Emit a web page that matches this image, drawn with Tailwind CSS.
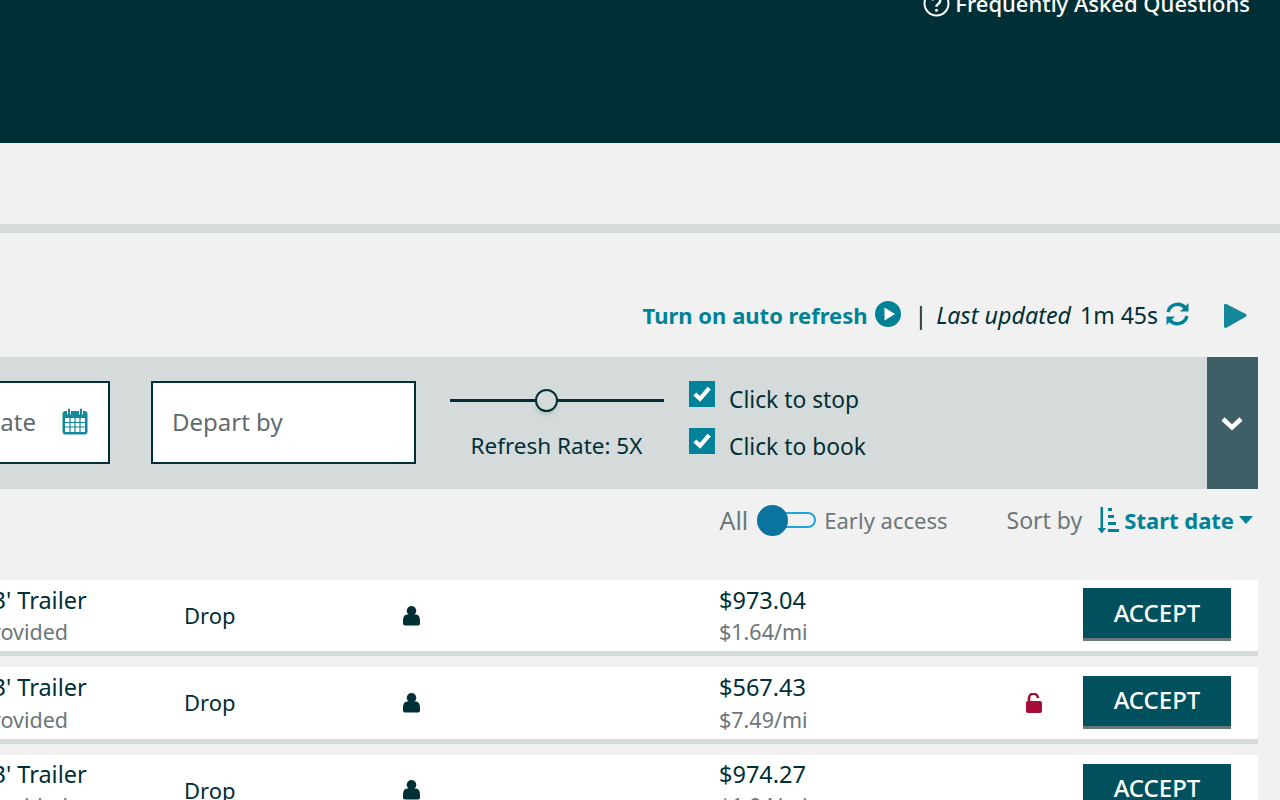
<!DOCTYPE html>
<html lang="en">
<head>
    <meta charset="UTF-8">
    <meta name="viewport" content="width=device-width, initial-scale=1.0">
    <script src="https://cdn.jsdelivr.net/npm/@tailwindcss/browser@4"></script>
    <title>Load Board</title>
</head>
<body class="h-[800px] overflow-hidden bg-[#f1f1f1] font-['Noto_Sans',sans-serif] text-[#002f36]">

    <!-- header -->
    <header class="h-[143px] bg-[#002f36] overflow-hidden flex justify-end pr-[30px]">
        <a class="flex items-center gap-[5px] h-[20px] mt-[-7px] text-white text-[22px] leading-none font-medium whitespace-nowrap">
            <svg class="w-[27px] h-[27px] shrink-0" viewBox="0 0 27 27" fill="none" stroke="white" stroke-width="2">
                <circle cx="13.5" cy="13.5" r="12"/>
                <path d="M9.8 10.5a3.7 3.7 0 1 1 5.9 3c-1.4 1-2.2 1.700-2.200 3.300" stroke-width="2.400"/>
                <circle cx="13.500" cy="20.300" r="1.500" fill="white" stroke="none"/>
            </svg>
            Frequently Asked Questions
        </a>
    </header>

    <div class="h-[81px]"></div>
    <div class="h-[9px] bg-[#d5dbdb]"></div>

    <!-- refresh line -->
    <div class="h-[124px] pt-[68px] flex justify-end items-start pr-[32px] text-[23px] leading-[28px] whitespace-nowrap">
        <span class="text-[22px] font-bold text-[#008296]">Turn on auto refresh</span>
        <svg class="ml-[7px] w-[26px] h-[26px]" viewBox="0 0 26 26"><circle cx="13" cy="13" r="13" fill="#008296"/><path d="M9.500 6.500v13l10.500-6.500z" fill="white"/></svg>
        <span class="ml-[14px]">|</span>
        <span class="ml-[9px] italic text-[23.300px]">Last updated</span>
        <span class="ml-[9px]">1m 45s</span>
        <svg class="ml-[7px] w-[25px] h-[26px]" viewBox="0 0 25 26" fill="none" stroke="#008296" stroke-width="3.400">
            <path d="M3 11a10 10 0 0 1 17-4.500"/><path d="M22 15a10 10 0 0 1-17 4.500"/>
            <path d="M23.500 2v8.500h-8.500z" fill="#008296" stroke="none"/><path d="M1.500 24v-8.500h8.500z" fill="#008296" stroke="none"/>
        </svg>
        <svg class="ml-[32px] mt-[1px] w-[26px] h-[28px]" viewBox="0 0 26 28"><path d="M2 3.500v21a1.500 1.500 0 0 0 2.300 1.200l19.500-11a1.500 1.500 0 0 0 0-2.600l-19.500-10a1.500 1.500 0 0 0-2.300 1.400z" fill="#13889b"/></svg>
    </div>

    <!-- filter bar -->
    <div class="w-[1258px] h-[132px] flex bg-[#d5dbdb]">
        <div class="flex-1 flex items-start pt-[24px] ml-[-60px]">
            <div class="w-[170px] h-[83px] pb-[2px] border-2 border-[#002f36] bg-white flex items-center justify-end pr-[20px] gap-[26px] text-[24px] text-[#5f6b6f]">
                <span>ate</span>
                <svg class="w-[26px] h-[27px]" viewBox="0 0 26 27" fill="none" stroke="#13889b">
                    <rect x="1" y="3.500" width="24" height="22.500" rx="2" fill="#13889b"/>
                    <rect x="3" y="10" width="20" height="14" fill="white" stroke="none"/>
                    <path d="M8 10v14M13 10v14M18 10v14M3 14.500h20M3 19h20" stroke-width="1.200"/>
                    <path d="M7 1.500v5M19 1.500v5" stroke="white" stroke-width="4"/><path d="M7 1.500v5M19 1.500v5" stroke-width="2" stroke-linecap="round"/>
                </svg>
            </div>
            <div class="ml-[41px] w-[265px] h-[83px] pb-[2px] border-2 border-[#002f36] bg-white flex items-center pl-[19px] text-[24px] text-[#5f6b6f]">Depart by</div>

            <div class="ml-[33px] w-[215px] flex flex-col items-center">
                <div class="relative w-[214px] h-[3px] mt-[18px] bg-[#002f36]">
                    <span class="absolute left-[85px] top-[-10px] w-[23px] h-[23px] rounded-full border-2 border-[#002f36] bg-[#d5dbdb] shadow-md"></span>
                </div>
                <p class="mt-[29px] text-[22.500px] leading-[30px] whitespace-nowrap">Refresh Rate: 5X</p>
            </div>

            <div class="ml-[25px] flex flex-col gap-[15px] text-[22.800px] leading-[27px]">
                <label class="flex items-start gap-[14px] whitespace-nowrap">
                    <svg class="w-[26px] h-[26px]" viewBox="0 0 27 27"><rect width="27" height="27" fill="#00829a"/><path d="M6 13.500l5.500 5 9.500-11" fill="none" stroke="white" stroke-width="4.400"/></svg>
                    <span class="mt-[5px]">Click to stop</span>
                </label>
                <label class="flex items-start gap-[14px] whitespace-nowrap">
                    <svg class="w-[26px] h-[26px]" viewBox="0 0 27 27"><rect width="27" height="27" fill="#00829a"/><path d="M6 13.500l5.500 5 9.500-11" fill="none" stroke="white" stroke-width="4.400"/></svg>
                    <span class="mt-[5px]">Click to book</span>
                </label>
            </div>
        </div>
        <button class="w-[51px] bg-[#3f5f66] flex items-center justify-center pr-[2px]">
            <svg class="w-[22px] h-[15px]" viewBox="0 0 22 15" fill="none" stroke="white" stroke-width="4.500"><path d="M2 3l9 8.500L20 3"/></svg>
        </button>
    </div>

    <!-- toggle and sort -->
    <div class="w-[1258px] h-[91px] pt-[16px] flex justify-end items-start pr-[5px] text-[22px] leading-[30px] text-[#6c7778] whitespace-nowrap">
        <span class="text-[25px]">All</span>
        <span class="relative ml-[9px] mt-[7px] w-[59px] h-[16px] rounded-full border-2 border-[#1ca7d8]">
            <span class="absolute left-[-2px] top-[-9px] w-[31px] h-[31px] rounded-full bg-[#0b73a0]"></span>
        </span>
        <span class="ml-[8px]">Early access</span>
        <span class="ml-[59px] text-[23px]">Sort by</span>
        <svg class="ml-[14px] mt-[2px] w-[23px] h-[27px]" viewBox="0 0 23 27" fill="#00829a">
            <path d="M4.500 0h2.500v21h3l-4.200 5.500L1.500 21h3z"/><rect x="12" y="1" width="4" height="3"/><rect x="12" y="8" width="6" height="3"/><rect x="12" y="15" width="8" height="3"/><rect x="12" y="22" width="11" height="3"/>
        </svg>
        <span class="ml-[5px] font-bold text-[#008296]">Start date</span>
        <svg class="ml-[5px] mt-[11px] w-[14px] h-[8px]" viewBox="0 0 14 8"><path d="M0 0h14L7 8z" fill="#008296"/></svg>
    </div>

    <!-- load rows -->
    <div class="w-[1258px] flex flex-col gap-[11px]">
        <div class="h-[76px] bg-white border-b-[5px] border-[#d5dbdb] flex items-start">
            <div class="ml-[-21px] w-[205px] pt-[6px] text-[23.500px] leading-[28px] whitespace-nowrap"><p>53' Trailer</p><p class="mt-[4px] text-[21.500px] text-[#6c7778]">Provided</p></div>
            <p class="w-[219px] pt-[20px] text-[22px] leading-[30px]">Drop</p>
            <svg class="mt-[26px] w-[17px] h-[20px]" viewBox="0 0 17 20" fill="#002f36"><circle cx="8.500" cy="4.800" r="4.800"/><path d="M0 15c0-6 3-6.500 4.500-6.500h8C14 8.500 17 9 17 15v2.500a2 2 0 0 1-2 2H2a2 2 0 0 1-2-2z"/></svg>
            <div class="ml-[299px] w-[120px] pt-[6px] text-[23.500px] leading-[28px]"><p>$973.04</p><p class="mt-[4px] text-[21.500px] text-[#6c7778]">$1.64/mi</p></div>
            <span class="ml-[244px] mt-[8px] w-[148px] h-[53px] bg-[#00505e] border-b-[3px] border-[#6c7778] flex items-center justify-center text-white text-[24px] font-medium">ACCEPT</span>
        </div>
        <div class="h-[77px] bg-white border-b-[5px] border-[#d5dbdb] flex items-start">
            <div class="ml-[-21px] w-[205px] pt-[6px] text-[23.500px] leading-[28px] whitespace-nowrap"><p>53' Trailer</p><p class="mt-[5px] text-[21.500px] text-[#6c7778]">Provided</p></div>
            <p class="w-[219px] pt-[20px] text-[22px] leading-[30px]">Drop</p>
            <svg class="mt-[26px] w-[17px] h-[20px]" viewBox="0 0 17 20" fill="#002f36"><circle cx="8.500" cy="4.800" r="4.800"/><path d="M0 15c0-6 3-6.500 4.500-6.500h8C14 8.500 17 9 17 15v2.500a2 2 0 0 1-2 2H2a2 2 0 0 1-2-2z"/></svg>
            <div class="ml-[299px] w-[120px] pt-[6px] text-[23.500px] leading-[28px]"><p>$567.43</p><p class="mt-[5px] text-[21.500px] text-[#6c7778]">$7.49/mi</p></div>
            <svg class="ml-[187px] mt-[26px] w-[16px] h-[20px]" viewBox="0 0 16 20"><path d="M3 8V5.500a4.500 4.500 0 0 1 9-.5" fill="none" stroke="#a50f36" stroke-width="2.600"/><rect y="8" width="16" height="12" rx="2" fill="#a50f36"/></svg>
            <span class="ml-[41px] mt-[9px] w-[148px] h-[53px] pb-[2px] bg-[#00505e] border-b-[3px] border-[#6c7778] flex items-center justify-center text-white text-[24px] font-medium">ACCEPT</span>
        </div>
        <div class="h-[77px] bg-white border-b-[5px] border-[#d5dbdb] flex items-start">
            <div class="ml-[-21px] w-[205px] pt-[5px] text-[23.500px] leading-[28px] whitespace-nowrap"><p>53' Trailer</p><p class="mt-[4px] text-[21.500px] text-[#6c7778]">Provided</p></div>
            <p class="w-[219px] pt-[20px] text-[22px] leading-[30px]">Drop</p>
            <svg class="mt-[25px] w-[17px] h-[20px]" viewBox="0 0 17 20" fill="#002f36"><circle cx="8.500" cy="4.800" r="4.800"/><path d="M0 15c0-6 3-6.500 4.500-6.500h8C14 8.500 17 9 17 15v2.500a2 2 0 0 1-2 2H2a2 2 0 0 1-2-2z"/></svg>
            <div class="ml-[299px] w-[120px] pt-[5px] text-[23.500px] leading-[28px]"><p>$974.27</p><p class="mt-[4px] text-[21.500px] text-[#6c7778]">$1.94/mi</p></div>
            <span class="ml-[244px] mt-[9px] w-[148px] h-[53px] pb-[2px] bg-[#00505e] border-b-[3px] border-[#6c7778] flex items-center justify-center text-white text-[24px] font-medium">ACCEPT</span>
        </div>
    </div>

</body>
</html>
